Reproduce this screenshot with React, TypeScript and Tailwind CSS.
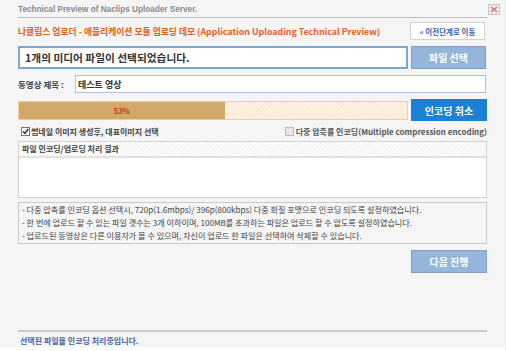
export default function App() {
  return (
    <div className="w-[506px] h-[351px] bg-[#f5f5f5] font-['Noto_Sans_CJK_KR',sans-serif] text-[#333] overflow-hidden flex flex-col border-r border-[#ececec]">
      <div className="flex items-center justify-between pl-[18px] pr-[5px] pt-[3px] h-[18px]">
        <span className="font-['Liberation_Sans',sans-serif] font-bold text-[8.2px] text-[#8a8a8a]">
          Technical Preview of Naclips Uploader Server.
        </span>
        <button className="w-[12px] h-[11px] border border-[#c8c8c8] bg-[#ececec] flex items-center justify-center">
          <svg width="8" height="7" viewBox="0 0 8 7">
            <path d="M1 1L7 6M7 1L1 6" stroke="#e06a6a" strokeWidth="1.4" />
          </svg>
        </button>
      </div>

      <div className="mx-[18px] mt-[1px] border-t border-[#bdbdbd]" />

      <div className="px-[18px] flex flex-col">
        <div className="flex items-center justify-between mt-[4px] h-[18px]">
          <span className="text-[8.8px] font-bold text-[#e0621e]">
            나클립스 업로더 - 애플리케이션 모듈 업로딩 데모 (Application Uploading Technical Preview)
          </span>
          <button className="w-[75px] h-[18px] mr-[2px] bg-white border border-[#d2d2d2] text-[7.5px] font-bold text-[#3a63a8]">
            « 이전단계로 이동
          </button>
        </div>

        <div className="flex gap-[3px] mt-[6px] h-[23px]">
          <div className="w-[390px] bg-white border-2 border-[#7aa7d6] flex items-center px-[5px] text-[10.7px] font-bold text-[#333]">
            1개의 미디어 파일이 선택되었습니다.
          </div>
          <button className="w-[75px] bg-[#93b6da] border border-[#7aa1cb] text-white text-[10px] font-bold">
            파일 선택
          </button>
        </div>

        <div className="flex items-center mt-[6px] h-[18px]">
          <span className="w-[57px] text-[8.5px] font-bold text-[#444]">동영상 제목 :</span>
          <div className="flex-1 mr-[1px] h-full bg-white border border-[#a9c1dd] flex items-center px-[2px] text-[9px] font-bold text-[#333]">
            테스트 영상
          </div>
        </div>

        <div className="flex gap-[3px] mt-[6px] h-[22px] items-center">
          <div className="relative w-[390px] h-[19px] bg-[repeating-linear-gradient(45deg,#fdf1e2_0,#fdf1e2_2px,#fbe9d6_2px,#fbe9d6_3px)] border border-[#efcf9f]">
            <div className="w-[53%] h-full bg-[#d0a869]" />
            <span className="absolute left-0 top-0 w-[53%] h-full flex items-center justify-center text-[7.5px] font-bold text-[#b83a22]">
              53%
            </span>
          </div>
          <button className="w-[76px] h-[22px] bg-[#1d80d7] text-white text-[10px] font-bold">
            인코딩 취소
          </button>
        </div>

        <div className="flex items-center justify-between mt-[3px] h-[15px]">
          <label className="flex items-center gap-[1px] pl-[3px] text-[8px] font-bold text-[#444]">
            <span className="w-[9px] h-[9px] border border-[#777] bg-white flex items-center justify-center">
              <svg width="7" height="7" viewBox="0 0 7 7">
                <path d="M1 3.5L3 5.5L6.2 1" stroke="#222" strokeWidth="1.3" fill="none" />
              </svg>
            </span>
            썸네일 이미지 생성후, 대표이미지 선택
          </label>
          <label className="flex items-center gap-[2px] text-[8px] font-bold text-[#555]">
            <span className="w-[9px] h-[9px] border border-[#bbb] bg-[#e6e6e6]" />
            다중 압축률 인코딩(Multiple compression encoding)
          </label>
        </div>

        <div className="mt-[2px] h-[57px] border border-[#d4d4d4] bg-white flex flex-col">
          <div className="h-[16px] border-b-2 border-[#e2e2e2] bg-[repeating-linear-gradient(45deg,#f6f6f6_0,#f6f6f6_2px,#fdfdfd_2px,#fdfdfd_3px)] flex items-center px-[3px] text-[8px] font-bold text-[#444]">
            파일 인코딩/업로딩 처리 결과
          </div>
        </div>

        <div className="mt-[4px] h-[42px] border border-[#c9c9c9] flex flex-col justify-center gap-[1px] px-[3px] text-[8.1px] text-[#444]">
          <div>- 다중 압축률 인코딩 옵션 선택시, 720p(1.6mbps)/ 396p(800kbps) 다중 화질 포맷으로 인코딩 되도록 설정하였습니다.</div>
          <div>- 한 번에 업로드 할 수 있는 파일 갯수는 3개 이하이며, 100MB를 초과하는 파일은 업로드 할 수 없도록 설정하였습니다.</div>
          <div>- 업로드된 동영상은 다른 이용자가 볼 수 있으며, 자신이 업로드 한 파일은 선택하여 삭제할 수 있습니다.</div>
        </div>

        <div className="flex justify-end mt-[6px]">
          <button className="w-[76px] h-[23px] bg-[#93b6da] border border-[#7aa1cb] text-white text-[10px] font-bold">
            다음 진행
          </button>
        </div>

        <div className="mt-[57px] border-t-2 border-[#cacaca]" />
        <div className="pl-[2px] mt-[3px] text-[8px] font-bold text-[#4b64a6]">
          선택된 파일을 인코딩 처리중입니다.
        </div>
      </div>
      <div className="mt-auto h-[4px] bg-white" />
    </div>
  );
}
